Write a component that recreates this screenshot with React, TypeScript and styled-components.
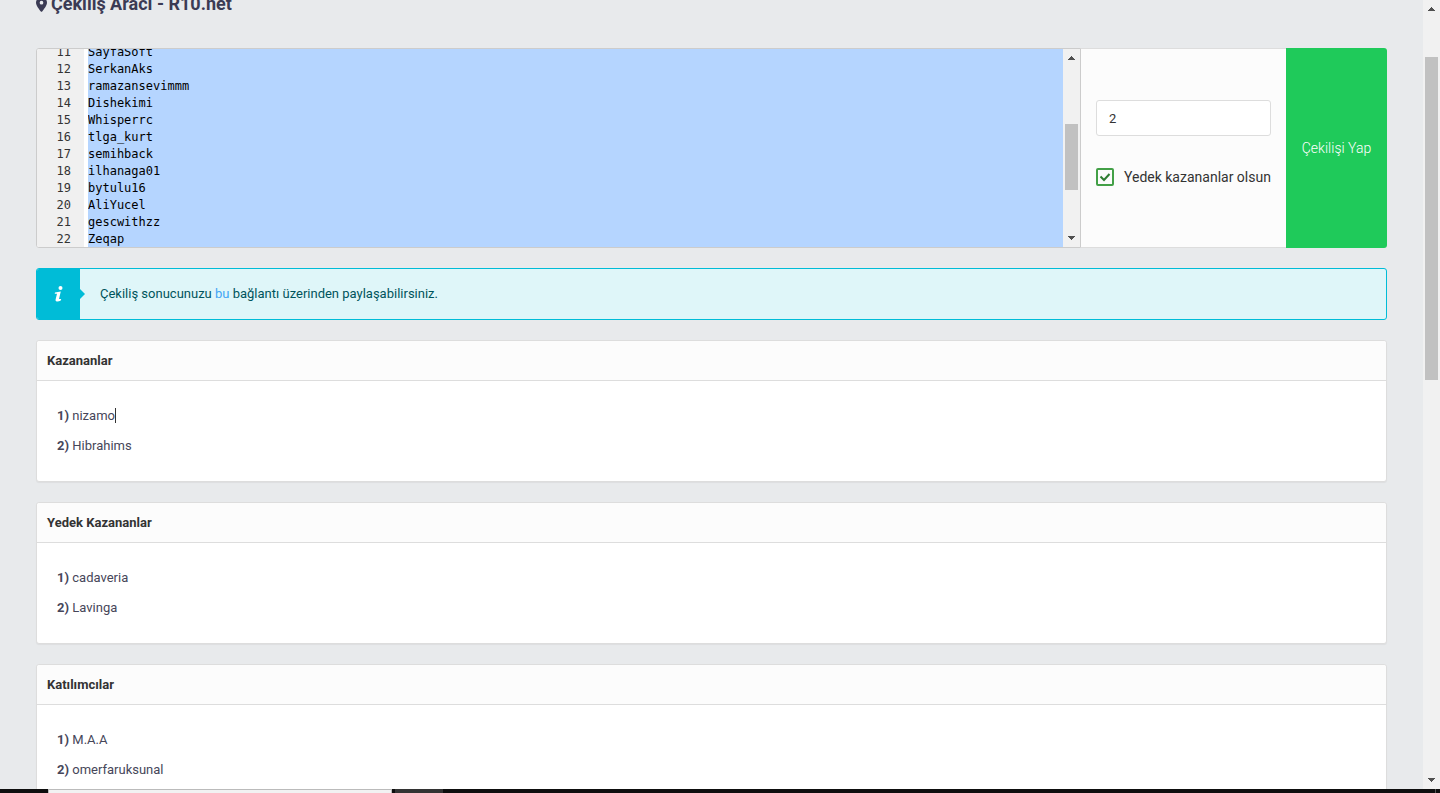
import React from "react";
import styled, { createGlobalStyle } from "styled-components";
import { FaLocationDot } from "react-icons/fa6";

const GlobalStyle = createGlobalStyle`
  * { box-sizing: border-box; }
  body {
    margin: 0;
    background: #e8eaec;
    color: #464659;
    font: 400 13px/20px Roboto, "Noto Sans", sans-serif;
  }
`;

const Shell = styled.div`
  display: flex;
  flex-direction: column;
  height: 100vh;
  overflow: hidden;
`;

const Viewport = styled.div`
  display: flex;
  flex: 1;
  min-height: 0;
`;

const Content = styled.main`
  flex: 1;
  min-width: 0;
  overflow: hidden;
  padding: 0 36px;
`;

const Title = styled.h1`
  display: flex;
  align-items: center;
  gap: 4px;
  margin: -8px 0 32px;
  color: #3b3b54;
  font-size: 18px;
  font-weight: 700;
  line-height: 24px;
`;

const Pin = styled(FaLocationDot)`
  width: 11px;
  height: 15px;
`;

const Track = styled.div`
  display: flex;
  flex-direction: column;
  flex: none;
  align-items: center;
  width: 17px;
  background: #f1f1f1;
`;

const Thumb = styled.div<{ $before: number; $size: number }>`
  width: 13px;
  flex: 0 1 ${(p) => p.$size}px;
  margin-top: ${(p) => p.$before}px;
  margin-bottom: auto;
  background: #c1c1c1;
`;

const Arrow = styled.svg`
  display: block;
  flex: none;
  width: 17px;
  height: 17px;
  fill: #505050;
`;

const DrawForm = styled.form`
  display: flex;
  height: 200px;
`;

const Editor = styled.div`
  display: flex;
  flex: 1;
  min-width: 0;
  overflow: hidden;
  border: 1px solid #ccc;
  border-radius: 3px 0 0 3px;
  background: #fff;
  font: 12px/17px "DejaVu Sans Mono", monospace;
`;

const Gutter = styled.ol`
  flex: none;
  width: 47px;
  margin: -5px 4px 0 0;
  padding: 0 13px 0 0;
  list-style: none;
  background: #f0f0f0;
  color: #333;
  text-align: right;
`;

const Names = styled.textarea`
  flex: 1;
  min-width: 0;
  height: 204px;
  margin: -5px 0 0;
  padding: 0;
  border: 0;
  outline: 0;
  resize: none;
  overflow: hidden;
  background: #b5d5ff;
  color: #000;
  font: inherit;
`;

const Options = styled.div`
  display: flex;
  flex-direction: column;
  flex: none;
  justify-content: center;
  gap: 31px;
  padding: 0 15px 9px;
  border: solid #ddd;
  border-width: 1px 0;
  background: #fcfcfc;
  color: #333;
`;

const CountInput = styled.input`
  width: 175px;
  height: 36px;
  padding: 0 12px;
  border: 1px solid #ddd;
  border-radius: 3px;
  background: #fff;
  color: #333;
  font: 13px/20px Roboto, sans-serif;
`;

const CheckLabel = styled.label`
  display: flex;
  align-items: center;
  gap: 10px;
  font-size: 14px;
  white-space: nowrap;
`;

const CheckBox = styled.span`
  display: grid;
  width: 18px;
  height: 18px;

  > * { grid-area: 1 / 1; }

  input {
    appearance: none;
    width: 18px;
    height: 18px;
    margin: 0;
    border: 2px solid #43a047;
    border-radius: 2px;
  }

  svg { pointer-events: none; }
`;

const DrawButton = styled.button`
  flex: none;
  width: 101px;
  padding: 0;
  border: 0;
  border-radius: 0 3px 3px 0;
  background: #1fca5a;
  color: #fff;
  font: 300 14px/20px Roboto, sans-serif;
`;

const Notice = styled.div`
  display: flex;
  align-items: stretch;
  height: 52px;
  margin-top: 20px;
  overflow: hidden;
  border: 1px solid #00bcd7;
  border-radius: 3px;
  background: #dff6f9;
  color: #00545c;
`;

const NoticeIcon = styled.div`
  display: grid;
  place-items: center;
  flex: none;
  width: 43px;
  background: #00bcd7;
`;

const NoticeArrow = styled.div`
  align-self: center;
  border: 5px solid transparent;
  border-left-color: #00bcd7;
  border-right-width: 0;
`;

const NoticeText = styled.p`
  align-self: center;
  margin: 0 15px;

  a { color: #42a5f5; text-decoration: none; }
`;

const Card = styled.section`
  margin-top: 20px;
  border: 1px solid #ddd;
  border-radius: 3px;
  background: #fff;
  box-shadow: 0 1px 1px rgba(0, 0, 0, 0.05);
`;

const CardTitle = styled.h2`
  margin: 0;
  padding: 10px 10px 9px;
  border-bottom: 1px solid #ddd;
  border-radius: 3px 3px 0 0;
  background: #fcfcfc;
  color: #333;
  font-size: 13px;
  font-weight: 700;
  line-height: 20px;
`;

const People = styled.ol`
  margin: 0;
  padding: 20px;
  list-style: none;
  line-height: 30px;
`;

const Person = styled.li<{ $caret?: boolean }>`
  b { font-weight: 700; }

  span {
    display: inline-block;
    line-height: 15px;
    box-shadow: ${(p) => (p.$caret ? "1px 0 #333" : "none")};
  }
`;

const Taskbar = styled.footer`
  display: flex;
  flex: none;
  gap: 3px;
  height: 4px;
  padding-left: 48px;
  background: #0e0e0e;
`;

const TaskSearch = styled.div`
  width: 344px;
  border: 1px solid #bbb;
  border-bottom: 0;
  background: #f2f2f2;
`;

const TaskItem = styled.div`
  width: 48px;
  background: #333;
`;

const DesktopEdge = styled.div`
  width: 1px;
  margin: 0 4px 0 auto;
  background: #555;
`;

const entries = [
  "SayfaSoft", "SerkanAks", "ramazansevimmm", "Dishekimi", "Whisperrc", "tlga_kurt",
  "semihback", "ilhanaga01", "bytulu16", "AliYucel", "gescwithzz", "Zeqap",
];

const groups = [
  { title: "Kazananlar", people: ["nizamo", "Hibrahims"], caret: 0 },
  { title: "Yedek Kazananlar", people: ["cadaveria", "Lavinga"] },
  { title: "Katılımcılar", people: ["M.A.A", "omerfaruksunal"] },
];

function Scrollbar({ before, size }: { before: number; size: number }) {
  return (
    <Track aria-hidden="true">
      <Arrow viewBox="0 0 17 17" shapeRendering="crispEdges">
        <path d="M8 7h1v1h1v1h1v1h1v1H5v-1h1V9h1V8h1z" />
      </Arrow>
      <Thumb $before={before} $size={size} />
      <Arrow viewBox="0 0 17 17" shapeRendering="crispEdges">
        <path d="M5 6h7v1h-1v1h-1v1H9v1H8V9H7V8H6V7H5z" />
      </Arrow>
    </Track>
  );
}

export default function App() {
  return (
    <Shell>
      <GlobalStyle />
      <Viewport>
        <Content>
          <Title>
            <Pin />
            Çekiliş Aracı - R10.net
          </Title>
          <DrawForm onSubmit={(e) => e.preventDefault()}>
            <Editor>
              <Gutter aria-hidden="true">
                {entries.map((name, i) => <li key={name}>{i + 11}</li>)}
              </Gutter>
              <Names aria-label="Katılımcı listesi" wrap="off" spellCheck={false} defaultValue={entries.join("\n")} />
              <Scrollbar before={58} size={66} />
            </Editor>
            <Options>
              <CountInput aria-label="Kazanan sayısı" defaultValue="2" />
              <CheckLabel>
                <CheckBox>
                  <input type="checkbox" defaultChecked />
                  <svg width="18" height="18" viewBox="0 0 18 18" fill="none" stroke="#2e7d32" strokeWidth="2">
                    <path d="M4.5 8.5l3.5 3.500 5.500-6" />
                  </svg>
                </CheckBox>
                Yedek kazananlar olsun
              </CheckLabel>
            </Options>
            <DrawButton type="submit">Çekilişi Yap</DrawButton>
          </DrawForm>
          <Notice role="status">
            <NoticeIcon>
              <svg width="10" height="16" viewBox="0 0 10 16" fill="#fff">
                <circle cx="6.500" cy="2" r="2" />
                <path d="M1 6.500L6.800 5.600 5 13h2.200L6.800 14.500Q4 16 2.200 15.300 1.300 14.800 1.600 13.400L3 7.700H.700z" />
              </svg>
            </NoticeIcon>
            <NoticeArrow />
            <NoticeText>
              Çekiliş sonucunuzu <a href="#sonuc">bu</a> bağlantı üzerinden paylaşabilirsiniz.
            </NoticeText>
          </Notice>
          {groups.map((group) => (
            <Card key={group.title}>
              <CardTitle>{group.title}</CardTitle>
              <People>
                {group.people.map((name, i) => (
                  <Person key={name} $caret={group.caret === i}>
                    <b>{i + 1})</b> <span>{name}</span>
                  </Person>
                ))}
              </People>
            </Card>
          ))}
        </Content>
        <Scrollbar before={40} size={323} />
      </Viewport>
      <Taskbar>
        <TaskSearch />
        <TaskItem />
        <DesktopEdge />
      </Taskbar>
    </Shell>
  );
}
